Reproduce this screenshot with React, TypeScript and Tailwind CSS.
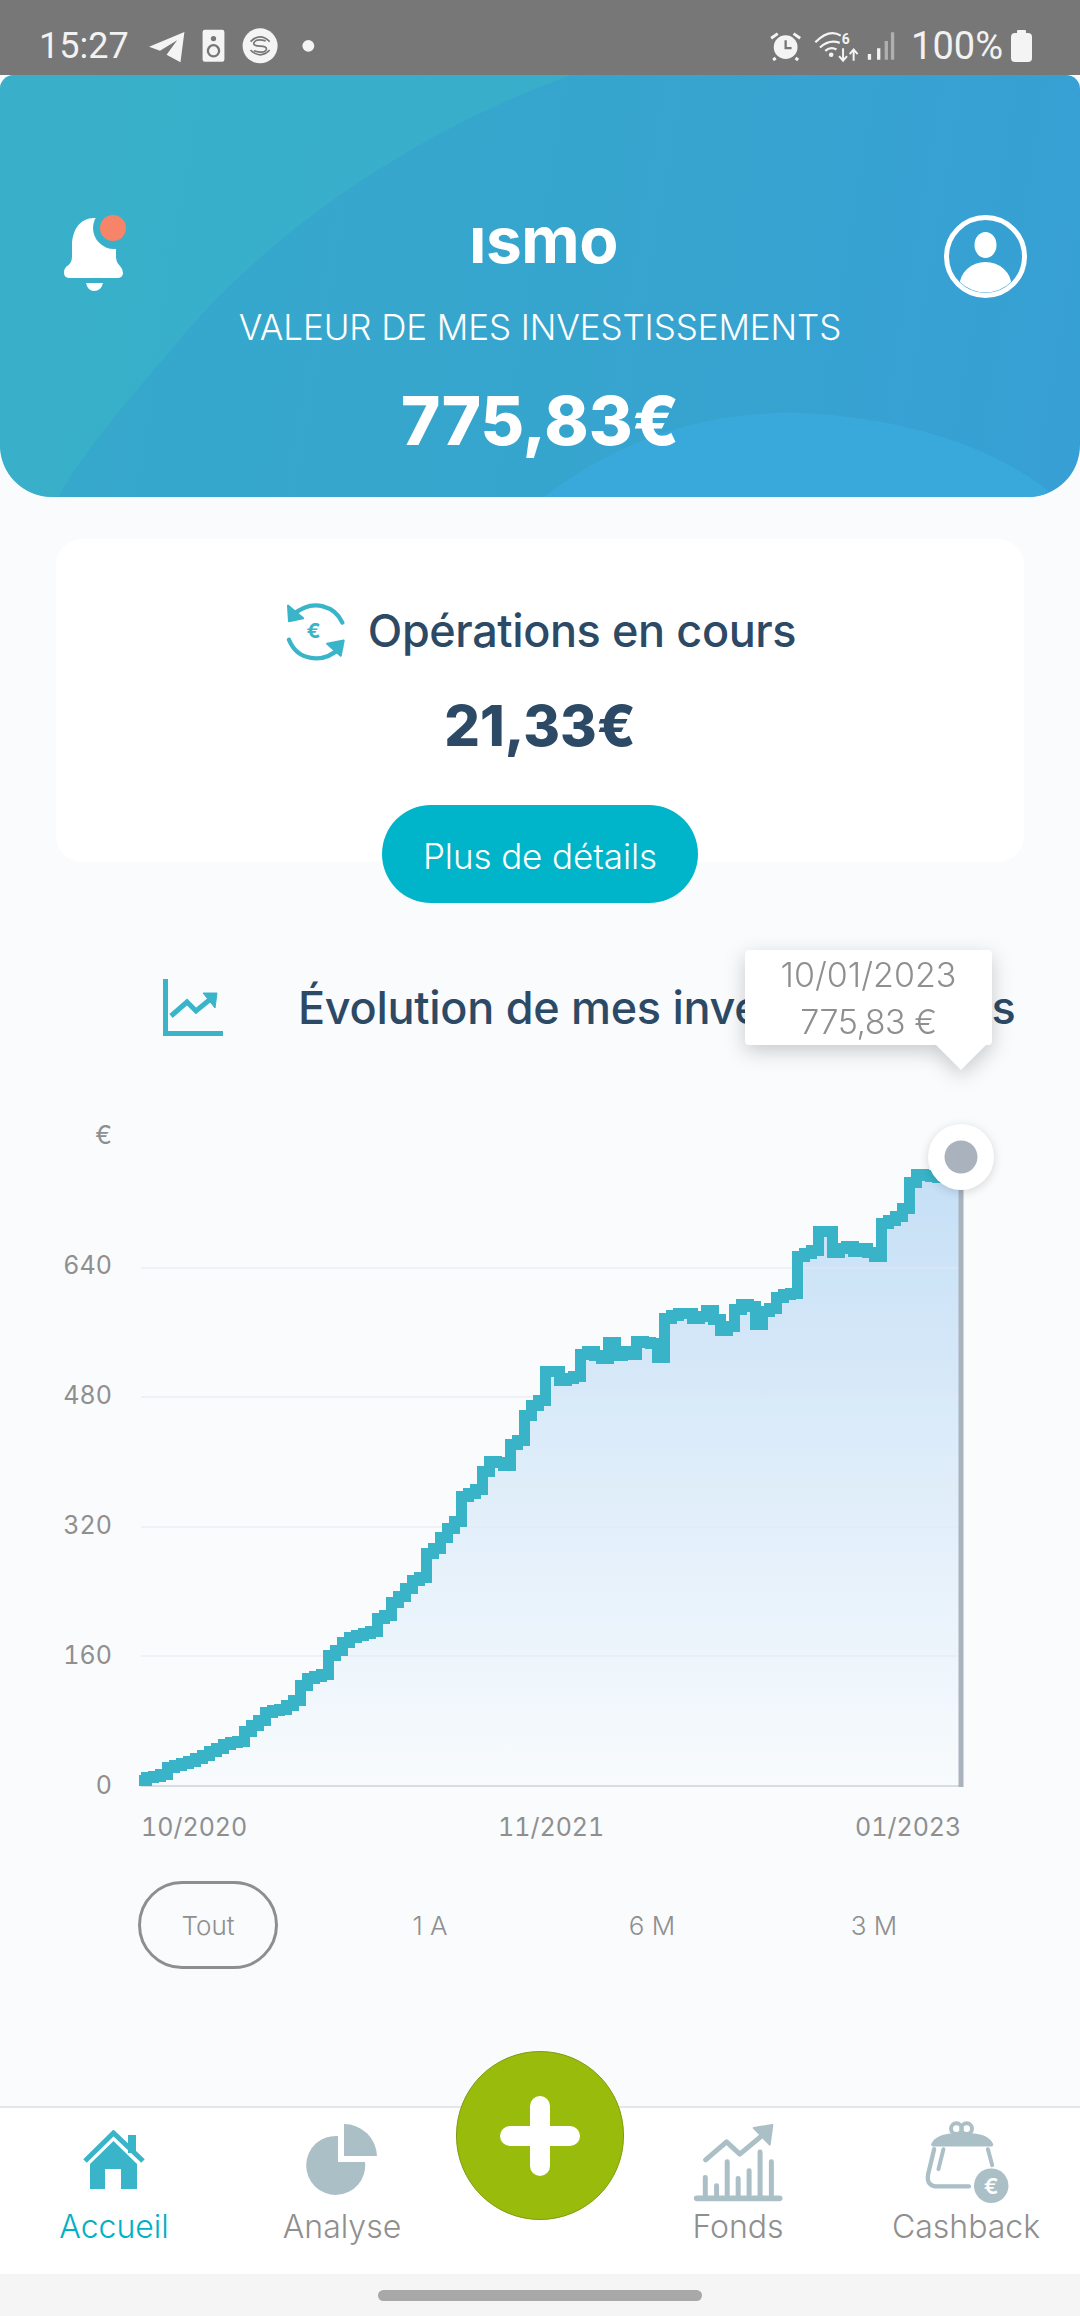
const sans = "font-['Inter','Liberation_Sans',sans-serif]"

// traced from the chart, as [x, y] in page pixels
const rawA = [[115,1482],[140,1475],[185,1468],[205,1450],[260,1442],[310,1425],[345,1412],[375,1400],[415,1395],[435,1370],[475,1350],[500,1330],[545,1325],[590,1300],[605,1262],[665,1250],[670,1215],[710,1195],[735,1172],[815,1155],[825,1130],[860,1120],[875,1090],[905,1075],[925,1050],[965,1035],[965,995],[1000,975],[1030,940],[1065,915],[1065,870],[1130,845],[1150,800],[1170,785],[1210,795],[1230,750],[1255,740]]
const rawB = [[0,700],[30,665],[60,650],[75,590],[100,590],[115,610],[160,600],[160,560],[210,545],[235,565],[250,560],[265,525],[280,560],[300,545],[345,560],[345,525],[390,530],[405,560],[430,555],[430,475],[485,460],[530,480],[545,460],[570,455],[590,505],[620,495],[650,440],[685,450],[695,505],[720,460],[760,450],[770,425],[810,420],[810,365],[830,340],[875,325],[890,285],[915,285],[930,335],[970,315],[1010,335],[1030,310],[1045,340],[1075,340],[1080,270],[1130,250],[1165,220],[1165,180],[1190,160],[1220,165],[1322,172]]
const points = [
  ...rawA.map(([x, y]) => [100 + x / 3, 1100 + y / 2.178]),
  ...rawB.map(([x, y]) => [520 + x / 3, 1100 + y / 2.178]),
]

function yAt(x: number) {
  for (let i = 1; i < points.length; i++) {
    const [x0, y0] = points[i - 1]
    const [x1, y1] = points[i]
    if (x <= x1) return x1 === x0 ? y1 : y0 + ((y1 - y0) * (x - x0)) / (x1 - x0)
  }
  return points[points.length - 1][1]
}

// the app's chart is a blocky canvas, so the line is stepped every 7px
function steppedPath() {
  let d = `M139 ${Math.round(yAt(139))}`
  for (let x = 146; x <= 961; x += 7) {
    d += ` H${x} V${Math.round(yAt(x))}`
  }
  return d
}

const linePath = steppedPath()
const areaPath = `${linePath} H961 V1786 H139 Z`
const yLabels = [
  ['€', 1135],
  ['640', 1265],
  ['480', 1395],
  ['320', 1525],
  ['160', 1655],
  ['0', 1785],
] as const

function StatusBar() {
  return (
    <div className="relative z-10 flex h-[75px] items-center bg-[#777777] pl-[39px] pt-[17px] text-[#f2f2f2]">
      <span className="w-[106px] font-['Roboto',sans-serif] text-[36px] leading-none">15:27</span>
      <svg width="175" height="38" viewBox="435 40 525 115" fill="#f4f4f4">
        <path d="M445 100 L552 55 L540 147 L498 124 L530 80 L478 112 Z" />
        <rect x="607" y="48" width="66" height="97" rx="7" />
        <circle cx="640" cy="75" r="8" fill="#777" />
        <circle cx="640" cy="112" r="17" fill="none" stroke="#777" strokeWidth="7" />
        <circle cx="781" cy="97" r="53" />
        <path d="M752 84 Q781 56 810 84 M752 110 Q781 138 810 110" fill="none" stroke="#777" strokeWidth="5" />
        <path d="M798 82 Q768 74 762 88 Q760 98 781 98 Q802 98 800 108 Q794 122 762 112" fill="none" stroke="#777" strokeWidth="5" />
        <circle cx="927" cy="97" r="18" />
      </svg>
      <div className="ml-auto flex items-center">
        <svg className="ml-[-4px]" width="127" height="33" viewBox="60 45 380 100" fill="#f4f4f4">
          <circle cx="108" cy="97" r="36" />
          <path d="M108 76 V100 H126" fill="none" stroke="#777" strokeWidth="7" />
          <path d="M64 70 L84 56 M152 70 L132 56 M78 130 L70 136 M138 130 L146 136" fill="none" stroke="#f4f4f4" strokeWidth="9" />
          <path d="M198 82 Q240 40 275 62 M212 98 Q240 72 272 84 M228 108 Q245 94 262 104" fill="none" stroke="#f4f4f4" strokeWidth="7" />
          <circle cx="246" cy="120" r="7" />
          <text x="278" y="88" fontSize="42" fontFamily="Roboto, sans-serif" fontWeight="700">6</text>
          <path d="M282 100 V136 M270 124 L282 138 L294 124 M314 138 V104 M302 118 L314 104 L326 118" fill="none" stroke="#f4f4f4" strokeWidth="6" />
          <path d="M362 118 V135 M390 100 V135" stroke="#f4f4f4" strokeWidth="10" />
          <path d="M413 78 V135 M432 52 V135" stroke="#b0b0b0" strokeWidth="10" />
        </svg>
        <span className="ml-[15px] font-['Roboto',sans-serif] text-[38px] leading-none">100%</span>
        <svg className="ml-[8px] mr-[48px]" width="21" height="32" viewBox="0 0 21 32" fill="#f4f4f4">
          <rect x="6" y="0" width="9" height="4" rx="1" />
          <rect x="0" y="3" width="21" height="29" rx="4" />
        </svg>
      </div>
    </div>
  )
}

function Bell() {
  return (
    <svg width="70" height="80" viewBox="60 212 70 80">
      <path
        d="M94 218 C80 218 72 230 72 246 V257 Q72 263 66 267 Q64 269 64 273 Q64 278 70 278 H117 Q123 278 123 273 Q123 269 120 266 Q116 262 116 257 V246 C116 230 108 218 94 218 Z"
        fill="#fff"
      />
      <path d="M86 283 H103 Q101 291 94 291 Q88 291 86 283 Z" fill="#fff" />
      <circle cx="114" cy="228" r="21" fill="#39b0c9" />
      <circle cx="113" cy="228" r="13" fill="#f58468" />
    </svg>
  )
}

function Profile() {
  return (
    <svg className="mt-[3px]" width="83" height="83" viewBox="0 0 83 83">
      <defs>
        <clipPath id="profile-clip">
          <circle cx="41.5" cy="41.5" r="36" />
        </clipPath>
      </defs>
      <circle cx="41.5" cy="41.5" r="39" fill="none" stroke="#fff" strokeWidth="5" />
      <ellipse cx="41.5" cy="30" rx="11" ry="13" fill="#fff" />
      <ellipse cx="41.5" cy="71" rx="26" ry="24" fill="#fff" clipPath="url(#profile-clip)" />
    </svg>
  )
}

function Header() {
  return (
    <div className={`relative flex h-[422px] flex-col overflow-hidden rounded-t-[14px] rounded-b-[52px] bg-[linear-gradient(100deg,#37a9cb,#36a5ce_55%,#379fd5)] text-white ${sans}`}>
      <svg className="absolute inset-0" width="1080" height="422" viewBox="0 0 1080 422">
        <path d="M0 0 H571 C420 55 275 150 175 270 C120 335 85 375 58 422 H0 Z" fill="#3ab4c8" fillOpacity="0.6" />
        <path d="M544 422 C610 370 700 335 800 338 C900 342 990 370 1047 415 L1050 422 Z" fill="#38a9da" />
      </svg>
      <div className="relative mt-[137px] grid grid-cols-[1fr_auto_1fr] items-start pl-[60px] pr-[53px]">
        <Bell />
        <span className="mt-[-3px] text-[64px] font-bold leading-[62px] tracking-[-0.5px]">ısmo</span>
        <div className="flex justify-end">
          <Profile />
        </div>
      </div>
      <p className="relative mt-[9px] text-center text-[35px] font-light leading-[40px] tracking-[-0.1px]">VALEUR DE MES INVESTISSEMENTS</p>
      <p className="relative mt-[39px] text-center text-[67px] font-extrabold leading-[70px]">775,83€</p>
    </div>
  )
}

function ExchangeIcon() {
  return (
    <svg width="63" height="63" viewBox="50 35 190 190" fill="none" stroke="#3ab4c9" strokeWidth="13" strokeLinecap="round">
      <path d="M226 106 C205 60 140 30 78 82" />
      <path d="M65 158 C90 220 165 235 222 180" />
      <path d="M62 55 L65 102 L108 93 Z" fill="#3ab4c9" strokeWidth="6" strokeLinejoin="round" />
      <path d="M230 160 L221 206 L180 170 Z" fill="#3ab4c9" strokeWidth="6" strokeLinejoin="round" />
      <text x="139" y="152" textAnchor="middle" fontSize="62" fontWeight="700" fontFamily="Inter, sans-serif" fill="#3ab4c9" stroke="none">€</text>
    </svg>
  )
}

function OperationsCard() {
  return (
    <div className={`mx-[56px] mt-[42px] flex h-[323px] flex-col items-center rounded-[26px] bg-white ${sans}`}>
      <div className="mt-[60px] flex items-center gap-[21px]">
        <ExchangeIcon />
        <span className="text-[45px] font-medium leading-[56px] tracking-[-0.4px] text-[#2c4a66]">Opérations en cours</span>
      </div>
      <p className="mt-[33px] text-[56px] font-extrabold leading-[62px] text-[#2c4a66]">21,33€</p>
      <button type="button" className="mb-[-41px] mt-auto flex h-[98px] w-[316px] items-center justify-center rounded-[49px] bg-[#00b5c9] pt-[4px] text-[35px] font-light tracking-[-0.1px] text-white">
        Plus de détails
      </button>
    </div>
  )
}

function Tooltip() {
  return (
    <div className="absolute left-[745px] top-[47px] flex flex-col items-end drop-shadow-[0_6px_10px_rgba(0,0,0,0.2)]">
      <div className="flex h-[95px] w-[247px] flex-col items-center justify-center rounded-[4px] bg-white text-[34px] font-light leading-[47px] text-[#8f8f8f]">
        <span>10/01/2023</span>
        <span className="tracking-[-0.5px]">775,83 €</span>
      </div>
      <div className="mr-[6px] h-0 w-0 border-x-[25px] border-t-[25px] border-x-transparent border-t-white" />
    </div>
  )
}

function Chart() {
  return (
    <svg className="mt-[70px] block tabular-nums" width="1080" height="745" viewBox="0 1110 1080 745">
      <defs>
        <linearGradient id="area-fill" gradientUnits="userSpaceOnUse" x1="0" y1="1165" x2="0" y2="1786">
          <stop offset="0" stopColor="#c5dff6" />
          <stop offset="1" stopColor="#f8fbfd" />
        </linearGradient>
      </defs>
      <path d={areaPath} fill="url(#area-fill)" />
      {[1268, 1397, 1527, 1656].map((y) => (
        <line key={y} x1="141" x2="958" y1={y} y2={y} stroke="#e6e8ee" strokeOpacity="0.5" strokeWidth="2" />
      ))}
      <line x1="141" x2="963" y1="1786" y2="1786" stroke="#d9dce1" strokeWidth="2" />
      <line x1="961" x2="961" y1="1170" y2="1787" stroke="#a9b2bd" strokeWidth="5" />
      <path d={linePath} fill="none" stroke="#39b3c7" strokeWidth="11" strokeLinejoin="miter" shapeRendering="crispEdges" />
      {yLabels.map(([label, y]) => (
        <text key={label} x="112" y={y + 9} textAnchor="end" fontSize="25" fontFamily="Inter, sans-serif" fill="#8f8f8f">
          {label}
        </text>
      ))}
      <text x="141" y="1836" fontSize="25" fontFamily="Inter, sans-serif" fill="#8f8f8f">10/2020</text>
      <text x="498" y="1836" fontSize="25" fontFamily="Inter, sans-serif" fill="#8f8f8f">11/2021</text>
      <text x="855" y="1836" fontSize="25" fontFamily="Inter, sans-serif" fill="#8f8f8f">01/2023</text>
      <circle cx="961" cy="1157" r="33" fill="#fff" style={{ filter: 'drop-shadow(0 2px 5px rgba(0,0,0,0.15))' }} />
      <circle cx="961" cy="1157" r="16.5" fill="#a9b2bd" />
    </svg>
  )
}

function ChartSection() {
  return (
    <div className={`relative mt-[41px] ${sans}`}>
      <div className="ml-[163px] mt-[72px] flex h-[65px] items-center gap-[75px]">
        <svg width="60" height="57" viewBox="0 0 60 57" fill="none" stroke="#3ab4c9">
          <path d="M2.5 0 V54.5 H60" strokeWidth="5" />
          <path d="M8 37 L24 23 L33 32 L50 18" strokeWidth="5" />
          <path d="M40 14 H54 L52 29 Z" fill="#3ab4c9" strokeWidth="1" />
        </svg>
        <span className="whitespace-nowrap text-[45px] font-medium leading-[56px] tracking-[-0.3px] text-[#2c4a66]">Évolution de mes investissements</span>
      </div>
      <Tooltip />
      <Chart />
      <div className="ml-[97px] mt-[26px] grid h-[88px] w-[888px] grid-cols-4 items-center justify-items-center text-[26px] font-light text-[#8f8f8f]">
        <span className="flex h-[88px] w-[140px] items-center justify-center rounded-[44px] border-[3px] border-[#8e8e8e]">Tout</span>
        <span>1 A</span>
        <span>6 M</span>
        <span>3 M</span>
      </div>
    </div>
  )
}

function HomeIcon() {
  return (
    <svg className="mb-[14px]" width="62" height="60" viewBox="0 0 62 60" fill="#39b4c9">
      <rect x="45" y="5" width="8" height="18" />
      <path d="M2 31 L30.5 3 L60 31" fill="none" stroke="#39b4c9" strokeWidth="5" />
      <path d="M30.5 11 L54 34 V59 H38 V39 H22 V59 H7 V34 Z" />
    </svg>
  )
}

function PieIcon() {
  return (
    <svg className="mb-[8px]" width="72" height="72" viewBox="0 0 72 72" fill="#abbfc7">
      <path d="M32 12 V38 H59 A29.5 29.5 0 1 1 32 12 Z" />
      <path d="M38 0 A33 33 0 0 1 71 32 H38 Z" />
    </svg>
  )
}

function FundsIcon() {
  return (
    <svg width="92" height="83" viewBox="95 45 275 250" fill="none" stroke="#abbfc7" strokeWidth="15" strokeLinecap="round" strokeLinejoin="round">
      <path d="M108 278 H358" strokeWidth="17" />
      <path d="M134 278 V215 M168 278 V240 M200 278 V168 M233 278 V218 M266 278 V195 M299 278 V138 M333 278 V168" />
      <path d="M135 162 L198 108 L238 145 L310 85" />
      <path d="M280 66 L336 57 L328 116 Z" fill="#abbfc7" strokeWidth="6" />
    </svg>
  )
}

function CashbackIcon() {
  return (
    <svg width="85" height="83" viewBox="790 45 255 250" fill="none" stroke="#abbfc7" strokeWidth="12" strokeLinecap="round" strokeLinejoin="round">
      <circle cx="887" cy="68" r="16" />
      <circle cx="918" cy="68" r="16" />
      <path d="M817 116 Q830 90 880 88 H930 Q980 90 992 116 Z" fill="#abbfc7" />
      <path d="M820 130 L802 205 Q795 242 832 242 H925" strokeWidth="13" />
      <path d="M848 130 L833 190 M982 130 L995 178" />
      <circle cx="992" cy="240" r="52" fill="#abbfc7" stroke="none" />
      <text x="992" y="264" textAnchor="middle" fontSize="66" fontWeight="600" fontFamily="Inter, sans-serif" fill="#fff" stroke="none">€</text>
    </svg>
  )
}

const navItems = [
  { label: 'Accueil', icon: <HomeIcon />, active: true },
  { label: 'Analyse', icon: <PieIcon />, active: false },
  { label: 'Fonds', icon: <FundsIcon />, active: false },
  { label: 'Cashback', icon: <CashbackIcon />, active: false },
]

function NavItem({ label, icon, active }: { label: string; icon: React.ReactNode; active: boolean }) {
  return (
    <div className="flex w-[228px] flex-col items-center">
      <div className="flex h-[84px] items-end">{icon}</div>
      <span className={`mt-[3px] text-[32px] font-light leading-[40px] ${active ? 'text-[#00b1c5]' : 'text-[#8f8f8f]'}`}>{label}</span>
    </div>
  )
}

function BottomNav() {
  return (
    <div className={`relative mt-auto ${sans}`}>
      <div className="flex h-[168px] border-t-2 border-[#e4e5e7] bg-white pt-[12px]">
        <NavItem {...navItems[0]} />
        <NavItem {...navItems[1]} />
        <div className="w-[168px]" />
        <NavItem {...navItems[2]} />
        <NavItem {...navItems[3]} />
      </div>
      <div className="absolute left-[456px] top-[-55px] flex h-[169px] w-[168px] items-center justify-center rounded-full border border-[#7f9c0c] bg-[#99bc0c]">
        <svg width="80" height="80" viewBox="0 0 80 80" fill="#fff">
          <rect x="30" y="0" width="20" height="80" rx="10" />
          <rect x="0" y="30" width="80" height="20" rx="10" />
        </svg>
      </div>
      <div className="flex h-[42px] items-start justify-center bg-[#f5f5f5] pt-[16px]">
        <div className="h-[11px] w-[324px] rounded-full bg-[#a8a8a8]" />
      </div>
    </div>
  )
}

export default function App() {
  return (
    <div className="flex h-[2316px] w-[1080px] flex-col overflow-hidden bg-[#f9fbfd]">
      <StatusBar />
      <Header />
      <OperationsCard />
      <ChartSection />
      <BottomNav />
    </div>
  )
}
